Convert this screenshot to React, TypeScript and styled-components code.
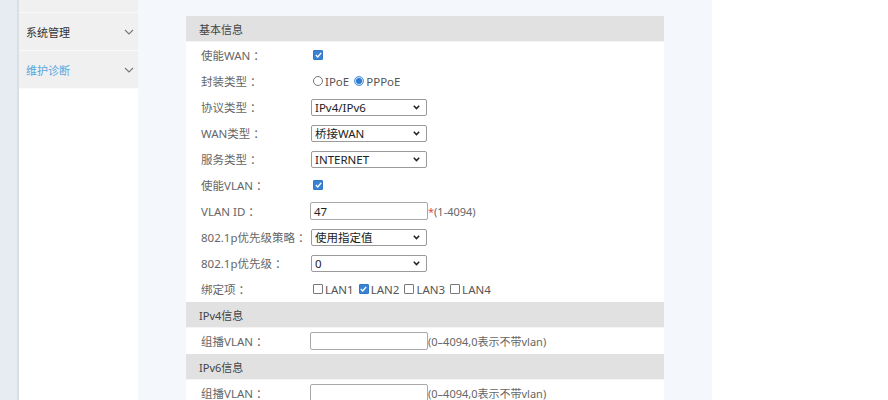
import React from "react";
import styled, { createGlobalStyle } from "styled-components";

const Global = createGlobalStyle`
  html, body { margin: 0; padding: 0; }
  body {
    width: 888px; height: 400px; overflow: hidden;
    font-family: "Noto Sans", "Noto Sans CJK SC", sans-serif;
    font-size: 12px; color: #555; background: #fff;
  }
`;

const Page = styled.div`
  display: flex;
  width: 888px;
  height: 400px;
  overflow: hidden;
`;

const Strip = styled.div`
  width: 17px;
  flex: none;
  background: #e6ecf1;
  border-right: 2px solid #d8dfe5;
`;

const Sidebar = styled.nav`
  width: 119px;
  flex: none;
  background: #fff;
  display: flex;
  flex-direction: column;
`;

const MenuItem = styled.div<{ $h: number; $active?: boolean }>`
  height: ${(p) => p.$h}px;
  background: #f0f0f0;
  border-bottom: 1px solid #fafafa;
  display: flex;
  align-items: center;
  justify-content: space-between;
  padding: 0 4px 0 7px;
  font-family: "Noto Sans CJK SC", sans-serif;
  font-size: 11px;
  color: ${(p) => (p.$active ? "#5aa6dd" : "#333")};
`;

const Main = styled.main`
  width: 526px;
  flex: none;
  background: #f4f7fb;
  padding: 16px 0 0 48px;
`;

const Panel = styled.section`
  width: 478px;
  background: #fff;
  display: flex;
  flex-direction: column;
`;

const SectionHead = styled.div`
  height: 25px;
  border-bottom: 1px solid #f4f4f4;
  background: #e1e1e1;
  display: flex;
  align-items: center;
  padding-left: 13px;
  color: #444;
  font-size: 11px;
  font-family: "Noto Sans", "Noto Sans CJK SC", sans-serif;
`;

const Row = styled.div`
  height: 26px;
  display: flex;
  align-items: center;
`;

const Label = styled.div`
  width: 125px;
  flex: none;
  padding-left: 15px;
  box-sizing: border-box;
  color: #666;
  font-size: 11.5px;
  font-family: "Noto Sans", "Noto Sans CJK SC", sans-serif;
  white-space: nowrap;
`;

const Colon = styled.span`
  margin-left: 3px;
`;

const Controls = styled.div`
  display: flex;
  align-items: center;
  color: #555;
  font-size: 11.5px;
`;

const Check = styled.span<{ $on?: boolean }>`
  width: 10px;
  height: 10px;
  box-sizing: border-box;
  border: 1px solid ${(p) => (p.$on ? "#2f78c8" : "#777")};
  background: ${(p) => (p.$on ? "#3a82d2" : "#fff")};
  border-radius: 1px;
  margin: 0 2px 0 2px;
  display: inline-flex;
  align-items: center;
  justify-content: center;
`;

const Radio = styled.span<{ $on?: boolean }>`
  width: 10px;
  height: 10px;
  box-sizing: border-box;
  border-radius: 50%;
  border: 1px solid ${(p) => (p.$on ? "#5b9ee0" : "#777")};
  background: ${(p) => (p.$on ? "#2f7bd0" : "#fff")};
  box-shadow: ${(p) => (p.$on ? "inset 0 0 0 1px #cfe3f7" : "none")};
  margin: 0 2px 0 2px;
  display: inline-block;
`;

const Opt = styled.span`
  display: inline-flex;
  align-items: center;
  margin-right: 3px;
  color: #555;
`;

const SelectBox = styled.div`
  position: relative;
  width: 116px;
  height: 17px;
  box-sizing: border-box;
  border: 1px solid #9a9a9a;
  border-radius: 2px;
  background: #fff;
  display: flex;
  align-items: center;
  padding-left: 3px;
  color: #222;
  font-size: 11.5px;
  font-family: "Noto Sans", "Noto Sans CJK SC", sans-serif;
`;

const Chevron = styled.svg`
  position: absolute;
  right: 6px;
  top: 5px;
`;

const Input = styled.div`
  width: 118px;
  height: 18px;
  flex: none;
  box-sizing: border-box;
  border: 1px solid #a8a8a8;
  border-radius: 2px;
  margin-left: -1px;
  background: #fff;
  display: flex;
  align-items: center;
  padding-left: 3px;
  color: #222;
  font-size: 11.5px;
`;

const Hint = styled.span`
  color: #666;
  font-size: 11px;
  font-family: "Noto Sans", "Noto Sans CJK SC", sans-serif;
  white-space: nowrap;
`;

const Star = styled.span`
  color: #e05050;
`;

const Right = styled.div`
  flex: 1;
  background: #fff;
`;

const Tick = () => (
  <svg width="7" height="6" viewBox="0 0 7 6">
    <path d="M0.8 3.1 L2.7 4.9 L6.2 0.9" fill="none" stroke="#fff" strokeWidth="1.4" />
  </svg>
);

const MenuChevron = () => (
  <svg width="10" height="6" viewBox="0 0 10 6">
    <path d="M1 1 L5 5 L9 1" fill="none" stroke="#777" strokeWidth="1.1" />
  </svg>
);

const Select = ({ value }: { value: string }) => (
  <SelectBox>
    {value}
    <Chevron width="7" height="5" viewBox="0 0 7 5">
      <path d="M0.8 0.8 L3.5 3.6 L6.2 0.8" fill="none" stroke="#222" strokeWidth="1.5" />
    </Chevron>
  </SelectBox>
);

const CheckItem = ({ on, text }: { on?: boolean; text?: string }) => (
  <Opt>
    <Check $on={on}>{on && <Tick />}</Check>
    {text}
  </Opt>
);

const FieldLabel = ({ children }: { children: React.ReactNode }) => (
  <Label>
    {children}
    <Colon>：</Colon>
  </Label>
);

export default function App() {
  return (
    <>
      <Global />
      <Page>
        <Strip />
        <Sidebar>
          <MenuItem $h={12} />
          <MenuItem $h={37}>
            系统管理
            <MenuChevron />
          </MenuItem>
          <MenuItem $h={37} $active>
            维护诊断
            <MenuChevron />
          </MenuItem>
        </Sidebar>
        <Main>
          <Panel>
            <SectionHead>基本信息</SectionHead>
            <Row>
              <FieldLabel>使能WAN</FieldLabel>
              <Controls>
                <CheckItem on />
              </Controls>
            </Row>
            <Row>
              <FieldLabel>封装类型</FieldLabel>
              <Controls>
                <Opt>
                  <Radio />
                  IPoE
                </Opt>
                <Opt>
                  <Radio $on />
                  PPPoE
                </Opt>
              </Controls>
            </Row>
            <Row>
              <FieldLabel>协议类型</FieldLabel>
              <Controls>
                <Select value="IPv4/IPv6" />
              </Controls>
            </Row>
            <Row>
              <FieldLabel>WAN类型</FieldLabel>
              <Controls>
                <Select value="桥接WAN" />
              </Controls>
            </Row>
            <Row>
              <FieldLabel>服务类型</FieldLabel>
              <Controls>
                <Select value="INTERNET" />
              </Controls>
            </Row>
            <Row>
              <FieldLabel>使能VLAN</FieldLabel>
              <Controls>
                <CheckItem on />
              </Controls>
            </Row>
            <Row>
              <FieldLabel>VLAN ID</FieldLabel>
              <Controls>
                <Input>47</Input>
                <Hint>
                  <Star>*</Star>(1-4094)
                </Hint>
              </Controls>
            </Row>
            <Row>
              <FieldLabel>802.1p优先级策略</FieldLabel>
              <Controls>
                <Select value="使用指定值" />
              </Controls>
            </Row>
            <Row>
              <FieldLabel>802.1p优先级</FieldLabel>
              <Controls>
                <Select value="0" />
              </Controls>
            </Row>
            <Row>
              <FieldLabel>绑定项</FieldLabel>
              <Controls>
                <CheckItem text="LAN1" />
                <CheckItem on text="LAN2" />
                <CheckItem text="LAN3" />
                <CheckItem text="LAN4" />
              </Controls>
            </Row>
            <SectionHead>IPv4信息</SectionHead>
            <Row>
              <FieldLabel>组播VLAN</FieldLabel>
              <Controls>
                <Input />
                <Hint>(0–4094,0表示不带vlan)</Hint>
              </Controls>
            </Row>
            <SectionHead>IPv6信息</SectionHead>
            <Row>
              <FieldLabel>组播VLAN</FieldLabel>
              <Controls>
                <Input />
                <Hint>(0–4094,0表示不带vlan)</Hint>
              </Controls>
            </Row>
          </Panel>
        </Main>
        <Right />
      </Page>
    </>
  );
}
